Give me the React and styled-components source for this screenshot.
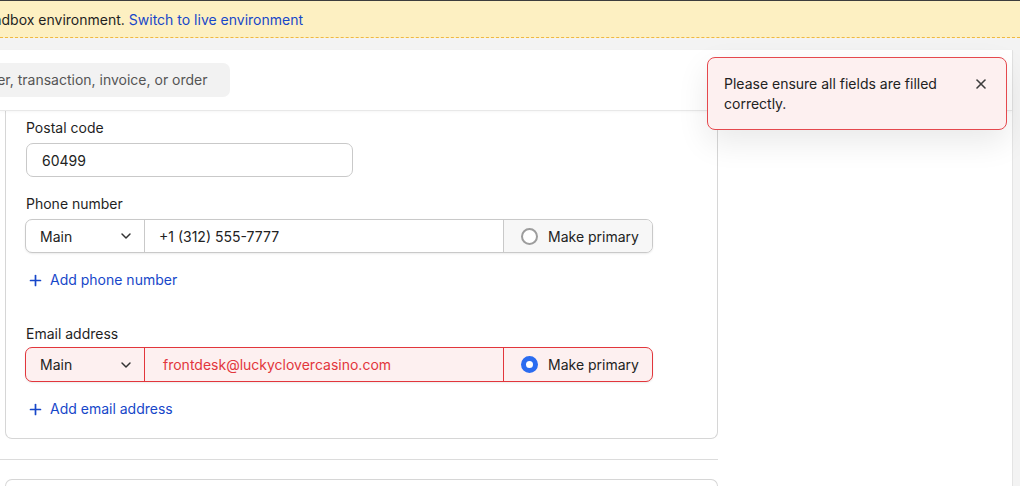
import React from "react";
import styled, { createGlobalStyle } from "styled-components";
import { ChevronDown, Plus, X } from "lucide-react";

const GlobalStyle = createGlobalStyle`
  html, body {
    margin: 0;
    padding: 0;
    background: #f3f3f3;
    font-family: Inter, "Noto Sans", sans-serif;
    font-size: 14px;
    color: #1f1f1f;
    overflow: hidden;
  }
  * { box-sizing: border-box; }
`;

const Page = styled.div`
  position: relative;
  width: 1020px;
  height: 486px;
  display: flex;
  flex-direction: column;
  overflow: hidden;
`;

const Banner = styled.div`
  height: 38px;
  flex-shrink: 0;
  display: flex;
  align-items: center;
  background: #fdf0c2;
  border-top: 1px solid #3d3d3d;
  border-bottom: 1px dashed #f0b941;
  white-space: nowrap;
`;

const BannerText = styled.span`
  margin-left: -22px;
  color: #1f1f1f;
`;

const BannerLink = styled.a`
  color: #1747c9;
  text-decoration: none;
  margin-left: 4px;
`;

const Body = styled.div`
  flex: 1;
  display: flex;
  padding: 12px 7px 0 0;
  min-height: 0;
`;

const Main = styled.main`
  flex: 1;
  display: flex;
  flex-direction: column;
  background: #fff;
  border-right: 1px solid #e4e4e4;
  min-height: 0;
`;

const Header = styled.header`
  height: 61px;
  flex-shrink: 0;
  display: flex;
  align-items: center;
  border-bottom: 1px solid #e8e8e8;
  box-shadow: 0 1px 3px rgba(0, 0, 0, 0.04);
  position: relative;
  z-index: 1;
`;

const Search = styled.div`
  width: 368px;
  height: 34px;
  margin-left: -138px;
  margin-top: -1px;
  display: flex;
  align-items: center;
  padding-left: 36px;
  background: #f2f2f2;
  border-radius: 7px;
  color: #555;
  white-space: nowrap;
  overflow: hidden;
`;

const Content = styled.div`
  flex: 1;
  width: 718px;
  padding-left: 5px;
  display: flex;
  flex-direction: column;
  overflow: hidden;
`;

const Card = styled.section`
  border: 1px solid #d6d6d6;
  border-top: 0;
  border-radius: 0 0 7px 7px;
  padding: 8px 20px 20px 20px;
  display: flex;
  flex-direction: column;
`;

const Field = styled.div`
  display: flex;
  flex-direction: column;
  gap: ${(p) => p.$gap || 6}px;
  margin-top: ${(p) => p.$top || 0}px;
`;

const Label = styled.label`
  line-height: 18px;
  color: #1f1f1f;
`;

const TextInput = styled.div`
  width: 327px;
  height: 34px;
  border: 1px solid #c9c9c9;
  border-radius: 7px;
  display: flex;
  align-items: center;
  padding-left: 15px;
  color: #222;
`;

const Group = styled.div`
  width: 628px;
  height: ${(p) => (p.$error ? 35 : 34)}px;
  margin-left: -1px;
  display: flex;
  border: 1px solid ${(p) => (p.$error ? "#e2363c" : "#c9c9c9")};
  border-radius: 7px;
  background: ${(p) => (p.$error ? "#fdf0f0" : "#fff")};
  box-shadow: 0 1px 2px rgba(0, 0, 0, 0.08);
  overflow: hidden;
`;

const Select = styled.div`
  width: 119px;
  flex-shrink: 0;
  display: flex;
  align-items: center;
  justify-content: space-between;
  padding: 0 10px 0 14px;
  border-right: 1px solid ${(p) => (p.$error ? "#e2363c" : "#c9c9c9")};
  color: #222;
`;

const GroupInput = styled.div`
  flex: 1;
  display: flex;
  align-items: center;
  padding-left: ${(p) => (p.$error ? 18 : 14)}px;
  color: ${(p) => (p.$error ? "#e2363c" : "#222")};
  border-right: 1px solid ${(p) => (p.$error ? "#e2363c" : "#c9c9c9")};
`;

const Primary = styled.div`
  width: 148px;
  flex-shrink: 0;
  display: flex;
  align-items: center;
  gap: 10px;
  padding-left: 17px;
  background: ${(p) => (p.$error ? "transparent" : "#f7f7f7")};
  color: #222;
`;

const Radio = styled.span`
  width: 17px;
  height: 17px;
  border-radius: 50%;
  flex-shrink: 0;
  border: ${(p) => (p.$checked ? "5px solid #2b6cf0" : "2px solid #9d9d9d")};
  background: #fff;
`;

const AddLink = styled.a`
  display: flex;
  align-items: center;
  gap: 6px;
  margin-top: 18px;
  padding-left: 1px;
  color: #1747c9;
  line-height: 18px;
  text-decoration: none;
`;

const Divider = styled.hr`
  width: 718px;
  margin: 20px 0 0 -5px;
  border: 0;
  border-top: 1px solid #dcdcdc;
`;

const NextCard = styled.div`
  margin-top: 19px;
  height: 40px;
  border: 1px solid #d6d6d6;
  border-bottom: 0;
  border-radius: 7px 7px 0 0;
`;

const Toast = styled.div`
  position: absolute;
  top: 57px;
  right: 13px;
  width: 300px;
  padding: 16px 17px 15px 16px;
  display: flex;
  align-items: flex-start;
  justify-content: space-between;
  gap: 16px;
  background: #fdf0f0;
  border: 1px solid #e5484d;
  border-radius: 8px;
  box-shadow: 0 12px 32px rgba(0, 0, 0, 0.09);
  z-index: 5;
`;

const ToastText = styled.p`
  margin: 0;
  line-height: 20px;
  color: #222;
`;

const Close = styled.button`
  border: 0;
  background: none;
  padding: 0;
  margin-top: 2px;
  display: flex;
  color: #3d3d3d;
`;

const ContactRow = ({ value, checked, error }) => (
  <Group $error={error}>
    <Select $error={error}>
      Main
      <ChevronDown size={16} strokeWidth={2.2} color="#333" />
    </Select>
    <GroupInput $error={error}>{value}</GroupInput>
    <Primary $error={error}>
      <Radio $checked={checked} />
      Make primary
    </Primary>
  </Group>
);

export default function App() {
  return (
    <Page>
      <GlobalStyle />
      <Banner>
        <BannerText>sandbox environment.</BannerText>
        <BannerLink href="#">Switch to live environment</BannerLink>
      </Banner>
      <Body>
        <Main>
          <Header>
            <Search>Search customer, transaction, invoice, or order</Search>
          </Header>
          <Content>
            <Card>
              <Field>
                <Label>Postal code</Label>
                <TextInput>60499</TextInput>
              </Field>
              <Field $top={18}>
                <Label>Phone number</Label>
                <ContactRow value="+1 (312) 555-7777" />
              </Field>
              <AddLink href="#">
                <Plus size={17} strokeWidth={2.4} />
                Add phone number
              </AddLink>
              <Field $top={36} $gap={4}>
                <Label>Email address</Label>
                <ContactRow value="frontdesk@luckyclovercasino.com" checked error />
              </Field>
              <AddLink href="#">
                <Plus size={17} strokeWidth={2.4} />
                Add email address
              </AddLink>
            </Card>
            <Divider />
            <NextCard />
          </Content>
        </Main>
      </Body>
      <Toast>
        <ToastText>Please ensure all fields are filled correctly.</ToastText>
        <Close aria-label="Close">
          <X size={16} strokeWidth={2.4} />
        </Close>
      </Toast>
    </Page>
  );
}
